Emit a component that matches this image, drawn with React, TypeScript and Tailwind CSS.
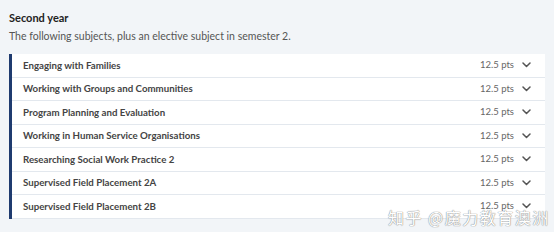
const SUBJECTS = [
  'Engaging with Families',
  'Working with Groups and Communities',
  'Program Planning and Evaluation',
  'Working in Human Service Organisations',
  'Researching Social Work Practice 2',
  'Supervised Field Placement 2A',
  'Supervised Field Placement 2B',
];

function Chevron() {
  return (
    <svg width="9" height="6" viewBox="0 0 9 6" fill="none" className="text-[#555]">
      <path d="M1 1l3.5 3.5L8 1" stroke="currentColor" strokeWidth="1.5" strokeLinecap="round" strokeLinejoin="round" />
    </svg>
  );
}

export default function App() {
  return (
    <div className="relative w-[554px] h-[247px] bg-white overflow-hidden" style={{ fontFamily: '"Lato", "Noto Sans", sans-serif' }}>
      <div className="bg-[#f2f5f8] h-[232px] px-[9px] pt-[11px]">
        <h3 className="text-[11px] font-bold text-[#222] leading-[14px]">Second year</h3>
        <p className="mt-[4px] text-[10.5px] text-[#555] leading-[14px]">
          The following subjects, plus an elective subject in semester 2.
        </p>
        <div className="mt-[11px] w-[536px] border-l-[3px] border-[#1f3b6f] bg-white">
          {SUBJECTS.map((s) => (
            <div
              key={s}
              className="flex items-center h-[23.5px] pl-[11px] pr-[14px] border-b border-[#e3e8ee]"
            >
              <span className="flex-1 text-[9.7px] font-bold text-[#444]">{s}</span>
              <span className="text-[9.5px] text-[#666] mr-[8px]">12.5 pts</span>
              <Chevron />
            </div>
          ))}
        </div>
      </div>
      <div
        className="absolute left-[388px] top-[206px] whitespace-nowrap text-[16px] leading-[22px] text-white tracking-[1.5px]"
        style={{ fontFamily: '"Noto Sans CJK SC", sans-serif', textShadow: '0 0 1px #888, 0 0 1px #888' }}
      >
        知乎 @魔力教育澳洲
      </div>
    </div>
  );
}
